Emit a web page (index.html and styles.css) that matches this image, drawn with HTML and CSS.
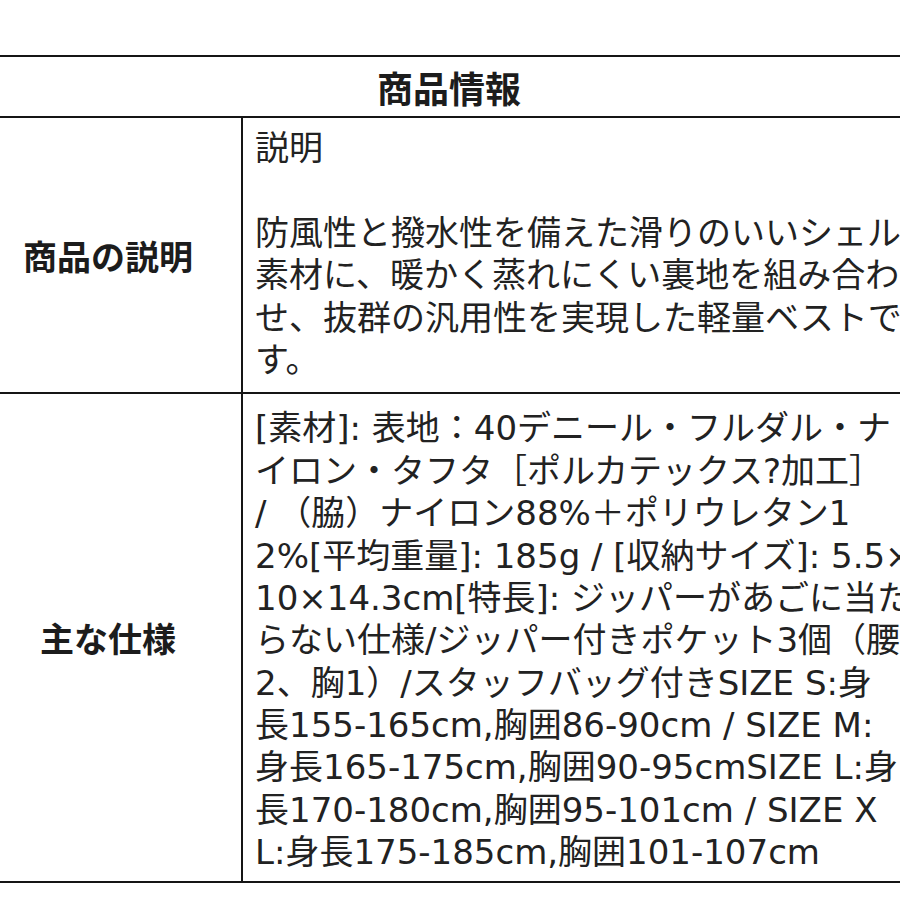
FILE: index.html
```html
<!DOCTYPE html>
<html lang="ja">
<head>
<meta charset="utf-8">
<title>商品情報</title>
<link rel="stylesheet" href="styles.css">
</head>
<body>
<div class="page">
  <div class="info-table">
    <div class="head-cell">商品情報</div>

    <div class="label-cell row-desc">商品の説明</div>
    <div class="value-cell row-desc">
      <div class="line">説明</div>
      <div class="line">&nbsp;</div>
      <div class="line">防風性と撥水性を備えた滑りのいいシェル</div>
      <div class="line">素材に、暖かく蒸れにくい裏地を組み合わ</div>
      <div class="line">せ、抜群の汎用性を実現した軽量ベストで</div>
      <div class="line">す。</div>
    </div>

    <div class="label-cell row-spec">主な仕様</div>
    <div class="value-cell row-spec">
      <div class="line">[素材]: 表地：40デニール・フルダル・ナ</div>
      <div class="line">イロン・タフタ［ポルカテックス?加工］</div>
      <div class="line">/ （脇）ナイロン88%＋ポリウレタン1</div>
      <div class="line">2%[平均重量]: 185g / [収納サイズ]: 5.5×</div>
      <div class="line">10×14.3cm[特長]: ジッパーがあごに当た</div>
      <div class="line">らない仕様/ジッパー付きポケット3個（腰</div>
      <div class="line">2、胸1）/スタッフバッグ付きSIZE S:身</div>
      <div class="line">長155-165cm,胸囲86-90cm / SIZE M:</div>
      <div class="line">身長165-175cm,胸囲90-95cmSIZE L:身</div>
      <div class="line">長170-180cm,胸囲95-101cm / SIZE X</div>
      <div class="line">L:身長175-185cm,胸囲101-107cm</div>
    </div>
  </div>
</div>
</body>
</html>
```

FILE: styles.css
```css
html, body {
  margin: 0;
  padding: 0;
  background: #ffffff;
}

body {
  width: 900px;
  height: 900px;
  overflow: hidden;
  font-family: "Noto Sans CJK JP", "Noto Sans", sans-serif;
  color: #1c1c1c;
}

.page {
  padding-top: 55px;
}

.info-table {
  display: grid;
  grid-template-columns: 268px 1fr;
  width: 940px;
  margin-left: -27px;
  border-top: 2px solid #151515;
  border-left: 2px solid #151515;
}

.head-cell {
  grid-column: 1 / 3;
  height: 59px;
  display: flex;
  align-items: center;
  justify-content: center;
  font-size: 36px;
  font-weight: 700;
  border-bottom: 2px solid #151515;
  padding-left: 8px;
}

.label-cell {
  display: flex;
  align-items: center;
  justify-content: center;
  font-size: 34px;
  font-weight: 700;
  border-right: 2px solid #151515;
  border-bottom: 2px solid #151515;
}

.value-cell {
  border-bottom: 2px solid #151515;
  padding-left: 12px;
  font-family: "DejaVu Sans", "Noto Sans CJK JP", sans-serif;
  font-size: 34px;
  line-height: 42.4px;
  white-space: nowrap;
  overflow: hidden;
  color: #222222;
}

.value-cell.row-desc {
  padding-top: 9px;
  padding-bottom: 11px;
}

.value-cell.row-spec {
  padding-top: 13px;
  padding-bottom: 7px;
}

.line {
  height: 42.4px;
}
```
